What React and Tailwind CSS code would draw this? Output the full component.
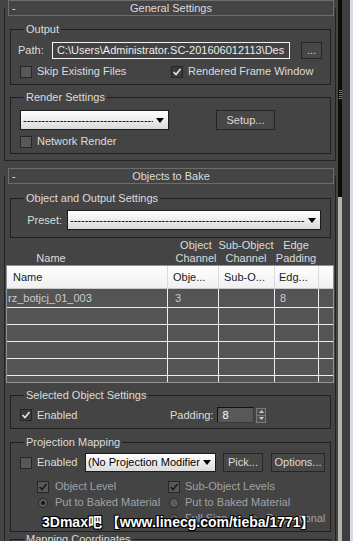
import React from 'react'

function Check({ checked, dim }) {
  return (
    <span
      className={`flex h-[12px] w-[12px] shrink-0 items-center justify-center border border-[#262626] ${
        checked && !dim ? 'bg-[#3a3a3a]' : 'bg-[#585858]'
      }`}
    >
      {checked && (
        <svg width="10" height="10" viewBox="0 0 10 10">
          <path d="M1.5 5 L4 7.5 L8.5 2" fill="none" stroke={dim ? '#1c1c1c' : '#e6e6e6'} strokeWidth="1.6" />
        </svg>
      )}
    </span>
  )
}

function Radio({ on }) {
  return (
    <span className="flex h-[10px] w-[10px] shrink-0 items-center justify-center rounded-full border border-[#2a2a2a] bg-[#5c5c5c]">
      {on && <span className="h-[4px] w-[4px] rounded-full bg-[#151515]" />}
    </span>
  )
}

function Drop({ className, children }) {
  return (
    <div
      className={`flex items-center border border-[#1a1a1a] bg-linear-to-b from-[#ffffff] to-[#dadada] pl-[2px] pr-[4px] text-black ${className}`}
    >
      <div className="flex-1 overflow-hidden whitespace-nowrap">{children}</div>
      <svg width="8" height="5" viewBox="0 0 8 5" className="ml-[3px] shrink-0">
        <path d="M0 0 H8 L4 5 Z" fill="#000" />
      </svg>
    </div>
  )
}

function Btn({ className, children }) {
  return (
    <div className={`flex items-center justify-center border border-[#262626] bg-[#474747] ${className}`}>
      {children}
    </div>
  )
}

function RollHead({ title }) {
  return (
    <div className="relative z-10 ml-[8px] flex h-[16px] w-[326px] items-center border border-[#6c6c6c] bg-[#444444]">
      <span className="w-[10px] pl-[3px]">-</span>
      <span className="flex-1 pr-[10px] text-center">{title}</span>
    </div>
  )
}

function Group({ title, className, children }) {
  return (
    <fieldset className={`ml-[5px] w-[321px] border border-[#1f1f1f] pl-[7px] ${className}`}>
      <legend className="ml-[6px] px-[2px] leading-[13px]">{title}</legend>
      {children}
    </fieldset>
  )
}

function Row({ tall, name, obj, edge }) {
  return (
    <div className={`flex border-b border-[#eeeeee] ${tall ? 'h-[19px]' : 'h-[17px]'}`}>
      <div className="flex w-[161px] items-center border-r border-[#eeeeee] pl-[1px]">{name}</div>
      <div className="flex w-[51px] items-center border-r border-[#eeeeee] pl-[7px]">{obj}</div>
      <div className="w-[56px] border-r border-[#eeeeee]" />
      <div className="flex w-[44px] items-center border-r border-[#eeeeee] pl-[5px]">{edge}</div>
      <div className="flex-1" />
    </div>
  )
}

export default function App() {
  const dashes = '-'.repeat(80)
  return (
    <div className="relative flex h-[541px] w-[353px] overflow-hidden bg-[#444444] font-['Liberation_Sans',Arial,sans-serif] text-[11px] leading-[13px] text-[#dcdcdc]">
      <div className="w-[338px] shrink-0">
        {/* General Settings */}
        <RollHead title="General Settings" />
        <div className="-mt-[8px] ml-[4px] w-[332px] border-x border-b border-[#232323] pt-[8px] pb-[6px]">
          <Group title="Output" className="mt-[7px] pb-[6px]">
            <div className="mt-[6px] flex h-[17px] items-center">
              <span className="w-[34px]">Path:</span>
              <div className="flex h-[17px] w-[238px] items-center overflow-hidden whitespace-nowrap border border-[#f2f2f2] bg-[#424242] pl-[4px] text-[#ececec]">
                C:\Users\Administrator.SC-201606012113\Des
              </div>
              <Btn className="ml-[11px] h-[17px] w-[21px]">...</Btn>
            </div>
            <div className="mt-[6px] flex h-[13px] items-center pl-[2px]">
              <div className="flex w-[151px] items-center gap-[5px]">
                <Check />
                <span>Skip Existing Files</span>
              </div>
              <div className="flex items-center gap-[5px]">
                <Check checked />
                <span>Rendered Frame Window</span>
              </div>
            </div>
          </Group>

          <Group title="Render Settings" className="mt-[6px] pb-[5px]">
            <div className="mt-[6px] flex h-[20px] items-center pl-[2px]">
              <Drop className="h-[20px] w-[149px]">{dashes}</Drop>
              <Btn className="ml-[47px] h-[20px] w-[59px]">Setup...</Btn>
            </div>
            <div className="mt-[5px] flex h-[13px] items-center gap-[5px] pl-[2px]">
              <Check />
              <span>Network Render</span>
            </div>
          </Group>
        </div>

        {/* Objects to Bake */}
        <div className="mt-[7px]">
          <RollHead title="Objects to Bake" />
        </div>
        <div className="-mt-[8px] ml-[4px] w-[332px] border-x border-[#232323] pt-[8px]">
          <Group title="Object and Output Settings" className="mt-[8px] pb-[7px]">
            <div className="mt-[5px] flex h-[20px] items-center">
              <span className="w-[44px] text-right">Preset:</span>
              <Drop className="ml-[5px] h-[20px] w-[254px]">{dashes}</Drop>
            </div>
          </Group>

          <div className="mt-[1px] flex whitespace-nowrap">
            <div className="ml-[2px] flex w-[88px] flex-col justify-end text-center">
              <span>Name</span>
            </div>
            <div className="w-[78px]" />
            <div className="flex w-[46px] flex-col items-center">
              <span>Object</span>
              <span>Channel</span>
            </div>
            <div className="flex w-[54px] flex-col items-center">
              <span>Sub-Object</span>
              <span>Channel</span>
            </div>
            <div className="flex w-[46px] flex-col items-center">
              <span>Edge</span>
              <span>Padding</span>
            </div>
          </div>

          <div className="ml-[1px] w-[328px] border border-[#8b939b] bg-[#545454] text-[#cacaca]">
            <div className="flex h-[23px] border-b border-[#c9c9c9] bg-linear-to-b from-[#ffffff] to-[#f0f0f0] text-[#1a1a1a]">
              <div className="flex w-[161px] items-center border-r border-[#dadada] pl-[6px]">Name</div>
              <div className="flex w-[51px] items-center border-r border-[#dadada] pl-[5px]">Obje...</div>
              <div className="flex w-[56px] items-center border-r border-[#dadada] pl-[5px]">Sub-O...</div>
              <div className="flex w-[44px] items-center border-r border-[#dadada] pl-[4px]">Edg...</div>
              <div className="flex-1" />
            </div>
            <Row tall name="rz_botjcj_01_003" obj="3" edge="8" />
            <Row />
            <Row />
            <Row />
            <Row />
            <div className="flex h-[6px]">
              <div className="w-[161px] border-r border-[#eeeeee]" />
              <div className="w-[51px] border-r border-[#eeeeee]" />
              <div className="w-[56px] border-r border-[#eeeeee]" />
              <div className="w-[44px] border-r border-[#eeeeee]" />
            </div>
          </div>

          <Group title="Selected Object Settings" className="mt-[6px] pb-[5px]">
            <div className="mt-[5px] flex h-[16px] items-center pl-[2px]">
              <div className="flex w-[150px] items-center gap-[5px]">
                <Check checked />
                <span>Enabled</span>
              </div>
              <span>Padding:</span>
              <div className="ml-[4px] flex h-[16px] w-[37px] items-center border border-t-[#111111] border-l-[#111111] border-r-[#3a3a3a] border-b-[#3a3a3a] bg-[#585858] pl-[4px] text-white">
                8
              </div>
              <div className="ml-[2px] flex h-[15px] w-[10px] flex-col border border-[#7a7a7a] bg-[#4e4e4e]">
                <div className="flex flex-1 items-center justify-center border-b border-[#7a7a7a]">
                  <svg width="5" height="3" viewBox="0 0 5 3">
                    <path d="M0 3 H5 L2.5 0 Z" fill="#d0d0d0" />
                  </svg>
                </div>
                <div className="flex flex-1 items-center justify-center">
                  <svg width="5" height="3" viewBox="0 0 5 3">
                    <path d="M0 0 H5 L2.5 3 Z" fill="#d0d0d0" />
                  </svg>
                </div>
              </div>
            </div>
          </Group>

          <Group title="Projection Mapping" className="mt-[7px] pb-[6px]">
            <div className="mt-[4px] flex h-[19px] items-center pl-[2px]">
              <div className="flex w-[65px] items-center gap-[5px]">
                <Check />
                <span>Enabled</span>
              </div>
              <Drop className="h-[19px] w-[131px]">(No Projection Modifier)</Drop>
              <Btn className="ml-[7px] h-[19px] w-[40px]">Pick...</Btn>
              <Btn className="ml-[8px] h-[19px] w-[54px]">Options...</Btn>
            </div>
            <div className="mt-[8px] flex h-[13px] items-center pl-[19px] text-[#a2a2a2]">
              <div className="flex w-[131px] items-center gap-[6px]">
                <Check checked dim />
                <span>Object Level</span>
              </div>
              <div className="flex items-center gap-[5px]">
                <Check checked dim />
                <span>Sub-Object Levels</span>
              </div>
            </div>
            <div className="mt-[3px] flex h-[13px] items-center pl-[20px] text-[#a2a2a2]">
              <div className="flex w-[131px] items-center gap-[7px]">
                <Radio on />
                <span>Put to Baked Material</span>
              </div>
              <div className="flex items-center gap-[6px]">
                <Radio />
                <span>Put to Baked Material</span>
              </div>
            </div>
            <div className="mt-[3px] flex h-[13px] items-center pl-[151px] text-[#a2a2a2]">
              <div className="flex w-[80px] items-center gap-[6px]">
                <Radio on />
                <span>Full Size</span>
              </div>
              <div className="flex items-center gap-[7px]">
                <Radio />
                <span>Proportional</span>
              </div>
            </div>
          </Group>

          <Group title="Mapping Coordinates" className="mt-[1px] h-[40px]" />
        </div>
      </div>

      {/* scroll strip */}
      <div className="flex w-[4px] shrink-0 flex-col">
        <div className="flex h-[197px] flex-col items-center gap-[1px] bg-[#0b0b0b] pt-[90px]">
          <div className="h-px w-[3px] bg-[#7a7a7a]" />
          <div className="h-px w-[3px] bg-[#7a7a7a]" />
          <div className="h-px w-[3px] bg-[#7a7a7a]" />
          <div className="h-px w-[3px] bg-[#7a7a7a]" />
          <div className="h-px w-[3px] bg-[#7a7a7a]" />
        </div>
        <div className="flex-1 bg-[#b3b3b3]" />
      </div>
      <div className="w-[8px] shrink-0 bg-[#3e3e3e]" />
      <div className="w-[3px] shrink-0 bg-[#d2dce6]" />

      {/* watermark */}
      <div className="absolute left-[42px] top-[513px] whitespace-nowrap font-['Liberation_Sans','Noto_Sans_CJK_SC',sans-serif] text-[14px] font-bold leading-[18px] text-white [text-shadow:1px_1px_0_#000,-1px_-1px_0_#000,1px_-1px_0_#000,-1px_1px_0_#000]">
        3Dmax吧 【www.linecg.com/tieba/1771】
      </div>
    </div>
  )
}
